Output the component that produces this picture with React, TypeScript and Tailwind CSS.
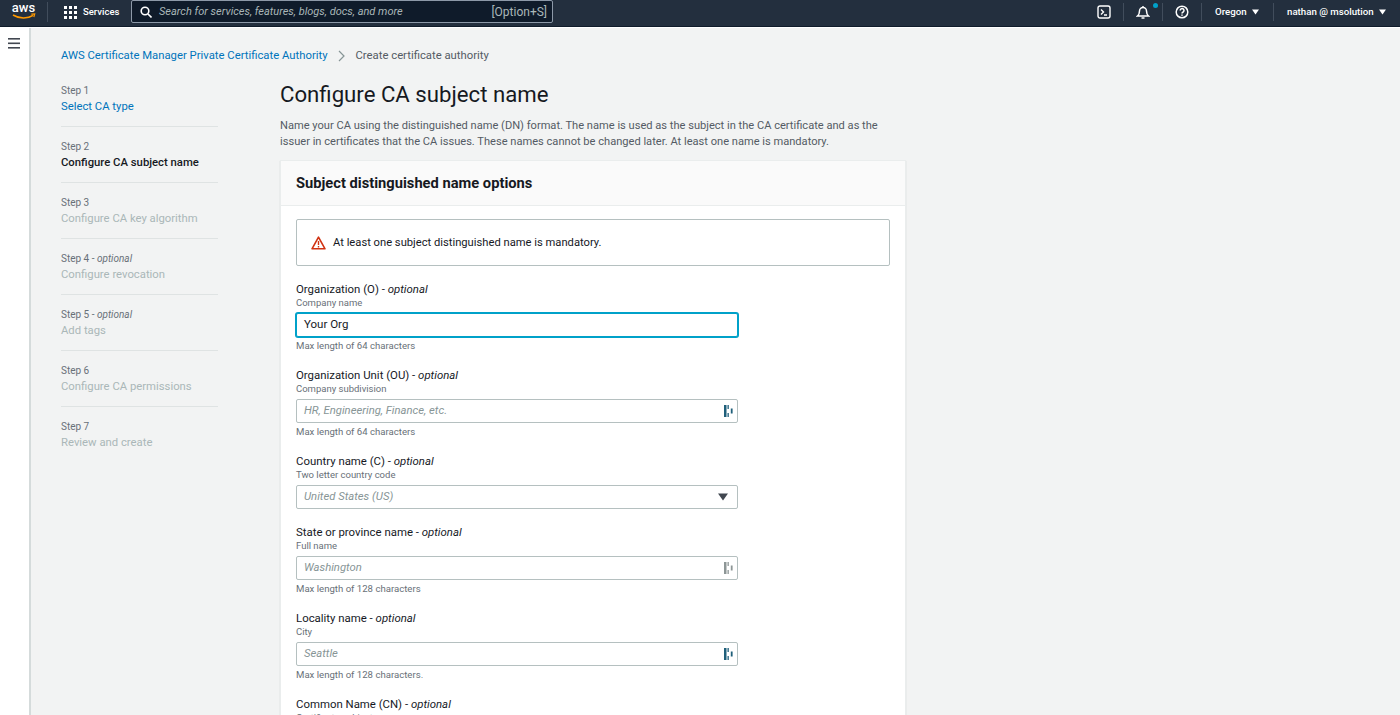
import React from "react";

const font = { fontFamily: 'Roboto, sans-serif' };

function FieldIcon({ dim }: { dim?: boolean }) {
  const c = dim ? "#8d9696" : "#1f5f7a";
  return (
    <svg width="9" height="12" viewBox="0 0 9 12" className="shrink-0">
      <rect x="0" y="0" width="2.5" height="12" fill={c} />
      <rect x="3.5" y="0" width="1.3" height="4" fill={c} />
      <rect x="3.5" y="8" width="1.3" height="4" fill={c} />
      <rect x="6.8" y="3.5" width="1.8" height="5" fill={c} />
    </svg>
  );
}

function Step({ step, optional, title, state }: { step: string; optional?: boolean; title: string; state: "link" | "active" | "off" }) {
  const cls =
    state === "link" ? "text-[#0073bb]" : state === "active" ? "text-[#16191f] font-medium" : "text-[#aab7b8]";
  return (
    <div className="pb-[11px] mb-[13px] border-b border-[#dfe3e3] last:border-b-0">
      <div className="text-[10px] leading-[14px] text-[#687078]">
        {step}
        {optional && <span> - <i>optional</i></span>}
      </div>
      <div className={`text-[11.3px] leading-[16px] mt-[1px] ${cls}`}>{title}</div>
    </div>
  );
}

function Field({
  label, desc, value, placeholder, hint, focus, select, dim, gap,
}: {
  label: string; desc: string; value?: string; placeholder?: string; hint?: string; focus?: boolean; select?: boolean; dim?: boolean; gap: string;
}) {
  return (
    <div className={gap}>
      <div className="text-[11.4px] leading-[16px] text-[#16191f]">
        {label} - <i>optional</i>
      </div>
      <div className="text-[9.5px] leading-[12px] text-[#687078]">{desc}</div>
      <div
        className={`mt-[4px] w-[442px] h-[24px] bg-white rounded-[2px] flex items-center justify-between pl-[7px] pr-[4px] border ${
          focus ? "border-[#00a1c9] shadow-[0_0_0_1px_#00a1c9]" : "border-[#b5c0c0]"
        }`}
      >
        {value ? (
          <span className="text-[11.5px] text-[#16191f]">{value}</span>
        ) : (
          <span className="text-[11.3px] italic text-[#879596]">{placeholder}</span>
        )}
        {select ? (
          <svg width="10" height="8" viewBox="0 0 10 8" className="mr-[5px]"><path d="M0 0.5h10L5 7.5z" fill="#414750" /></svg>
        ) : value ? null : (
          <FieldIcon dim={dim} />
        )}
      </div>
      {hint && <div className="text-[9.6px] leading-[12px] text-[#687078] mt-[3px]">{hint}</div>}
    </div>
  );
}

const Divider = () => <div className="w-px h-[18px] bg-[#414d5c] shrink-0" />;
const Caret = () => (
  <svg width="7" height="6" viewBox="0 0 7 6" className="shrink-0"><path d="M0 .5h7L3.5 5.5z" fill="#fff" /></svg>
);

export default function App() {
  return (
    <div className="h-[715px] w-[1400px] overflow-hidden flex flex-col bg-white" style={font}>
      <header className="h-[27px] shrink-0 bg-[#232f3e] border-b border-[#0f1b2a] flex items-stretch text-white pb-[2px]">
        <div className="w-[47px] flex items-center justify-center">
          <svg width="26" height="22" viewBox="0 0 26 22">
            <text x="12.5" y="10.5" textAnchor="middle" fontSize="13" fontWeight="500" fill="#fff" style={{ fontFamily: "Roboto, sans-serif" }}>aws</text>
            <path d="M2 14c6 3.8 15 3.8 20 .3" stroke="#ff9900" strokeWidth="1.5" fill="none" />
            <path d="M20.3 13.2l3.4-.3-.9 3.1" stroke="#ff9900" strokeWidth="1.2" fill="none" />
          </svg>
        </div>
        <div className="my-[2px] w-px bg-[#414d5c]" />
        <div className="flex items-center pl-[16px] gap-[6px] w-[83px] shrink-0">
          <svg width="13" height="13" viewBox="0 0 13 13" fill="#fff" className="shrink-0">
            {[0, 5, 10].map((x) => [0, 5, 10].map((y) => <rect key={`${x}${y}`} x={x} y={y} width="3" height="3" />))}
          </svg>
          <span className="text-[9.5px] font-medium">Services</span>
        </div>
        <div className="w-[422px] h-[23px] bg-[#0f1b2a] border border-[#8d99a8] rounded-[2px] flex items-center justify-between pl-[8px] pr-[5px] pt-[1px] box-border">
          <div className="flex items-center gap-[7px]">
            <svg width="12" height="12" viewBox="0 0 12 12" fill="none" stroke="#fff" strokeWidth="1.6"><circle cx="5" cy="5" r="3.8" /><path d="M8 8l3.5 3.5" /></svg>
            <span className="text-[11px] italic text-[#aab7b8]">Search for services, features, blogs, docs, and more</span>
          </div>
          <span className="text-[12px] text-[#aab7b8]">[Option+S]</span>
        </div>
        <div className="flex-1" />
        <div className="flex items-center text-[9.7px] font-medium">
          <div className="w-[38px] flex justify-center">
            <svg width="14" height="14" viewBox="0 0 14 14" fill="none" stroke="#fff" strokeWidth="1.4"><rect x="1" y="1" width="12" height="12" rx="2" /><path d="M4 4.5l2.5 2.5L4 9.5M7 10h3" /></svg>
          </div>
          <Divider />
          <div className="w-[38px] flex justify-center relative">
            <svg width="14" height="14" viewBox="0 0 14 14" fill="none" stroke="#fff" strokeWidth="1.5"><path d="M1.5 11h11c-1.6-1.4-2-2.6-2-5a3.5 3.5 0 00-7 0c0 2.4-.4 3.6-2 5zM5.5 13h3M7 1v1" /></svg>
            <span className="absolute right-[4px] top-[-2px] w-[5px] h-[5px] rounded-full bg-[#00a1c9]" />
          </div>
          <Divider />
          <div className="w-[38px] flex justify-center">
            <svg width="14" height="14" viewBox="0 0 14 14" fill="none" stroke="#fff" strokeWidth="1.5"><circle cx="7" cy="7" r="5.8" /><path d="M5.2 5.5a1.9 1.9 0 113 1.5c-.8.5-1.2.9-1.2 1.6M7 9.6v1.2" /></svg>
          </div>
          <Divider />
          <div className="w-[71px] flex items-center pl-[13px] gap-[5px]">
            <span>Oregon</span>
            <Caret />
          </div>
          <Divider />
          <div className="w-[126px] flex items-center pl-[13px] gap-[5px]">
            <span>nathan @ msolution</span>
            <Caret />
          </div>
        </div>
      </header>
      <div className="flex-1 flex min-h-0 pt-px bg-white">
        <aside className="w-[29px] shrink-0 bg-white border-r-2 border-[#d5dbdb] flex justify-center pt-[10px] box-content">
          <svg width="12" height="11" viewBox="0 0 12 11" fill="#414750" className="mr-[1px]"><rect width="12" height="1.6" y="0" /><rect width="12" height="1.6" y="4.5" /><rect width="12" height="1.6" y="9" /></svg>
        </aside>
        <main className="flex-1 bg-[#f2f3f3] overflow-hidden pl-[30px]">
          <nav className="pt-[20px] h-[53px] flex items-start text-[11.3px] leading-[16px]">
            <span className="text-[#0073bb]">AWS Certificate Manager Private Certificate Authority</span>
            <svg width="8" height="12" viewBox="0 0 8 12" fill="none" stroke="#879596" strokeWidth="1.2" className="mx-[10px] mt-[2px]"><path d="M1 1l5 5-5 5" /></svg>
            <span className="text-[#545b64]">Create certificate authority</span>
          </nav>
          <div className="flex">
            <div className="w-[157px] shrink-0 pt-[3px]">
              <Step step="Step 1" title="Select CA type" state="link" />
              <Step step="Step 2" title="Configure CA subject name" state="active" />
              <Step step="Step 3" title="Configure CA key algorithm" state="off" />
              <Step step="Step 4" optional title="Configure revocation" state="off" />
              <Step step="Step 5" optional title="Add tags" state="off" />
              <Step step="Step 6" title="Configure CA permissions" state="off" />
              <Step step="Step 7" title="Review and create" state="off" />
            </div>
            <div className="ml-[62px] w-[626px] shrink-0">
              <h1 className="text-[22.2px] leading-[28px] text-[#16191f] mt-[-1px]">Configure CA subject name</h1>
              <p className="mt-[10px] text-[11.1px] leading-[16px] text-[#545b64] w-[604px]">
                Name your CA using the distinguished name (DN) format. The name is used as the subject in the CA certificate and as the issuer in certificates that the CA issues. These names cannot be changed later. At least one name is mandatory.
              </p>
              <section className="mt-[10px] w-[626px] bg-white border border-[#eaeded] shadow-[0_1px_1px_rgba(0,28,36,0.2)]">
                <div className="h-[45px] bg-[#fafafa] border-b border-[#eaeded] flex items-center px-[15px]">
                  <h2 className="text-[14.7px] font-bold text-[#16191f]">Subject distinguished name options</h2>
                </div>
                <div className="px-[15px] pt-[13px] pb-[20px]">
                  <div className="h-[47px] w-[594px] border border-[#b5c0c0] rounded-[2px] flex items-center pl-[14px] gap-[7px]">
                    <svg width="15" height="14" viewBox="0 0 15 14"><path d="M7.5 1.2L14 12.8H1z" fill="none" stroke="#d13212" strokeWidth="1.6" strokeLinejoin="round" /><path d="M7.5 5v4M7.5 10v1.5" stroke="#d13212" strokeWidth="1.4" /></svg>
                    <span className="text-[11.2px] text-[#16191f] mt-[1px]">At least one subject distinguished name is mandatory.</span>
                  </div>
                  <div className="h-[15px]" />
                  <Field gap="h-[86px]" label="Organization (O)" desc="Company name" value="Your Org" focus hint="Max length of 64 characters" />
                  <Field gap="h-[86px]" label="Organization Unit (OU)" desc="Company subdivision" placeholder="HR, Engineering, Finance, etc." hint="Max length of 64 characters" />
                  <Field gap="h-[71px]" label="Country name (C)" desc="Two letter country code" placeholder="United States (US)" select />
                  <Field gap="h-[86px]" label="State or province name" desc="Full name" placeholder="Washington" dim hint="Max length of 128 characters" />
                  <Field gap="h-[86px]" label="Locality name" desc="City" placeholder="Seattle" hint="Max length of 128 characters." />
                  <Field gap="h-[86px]" label="Common Name (CN)" desc="Certificate subject" placeholder="" />
                </div>
              </section>
            </div>
          </div>
        </main>
      </div>
    </div>
  );
}
